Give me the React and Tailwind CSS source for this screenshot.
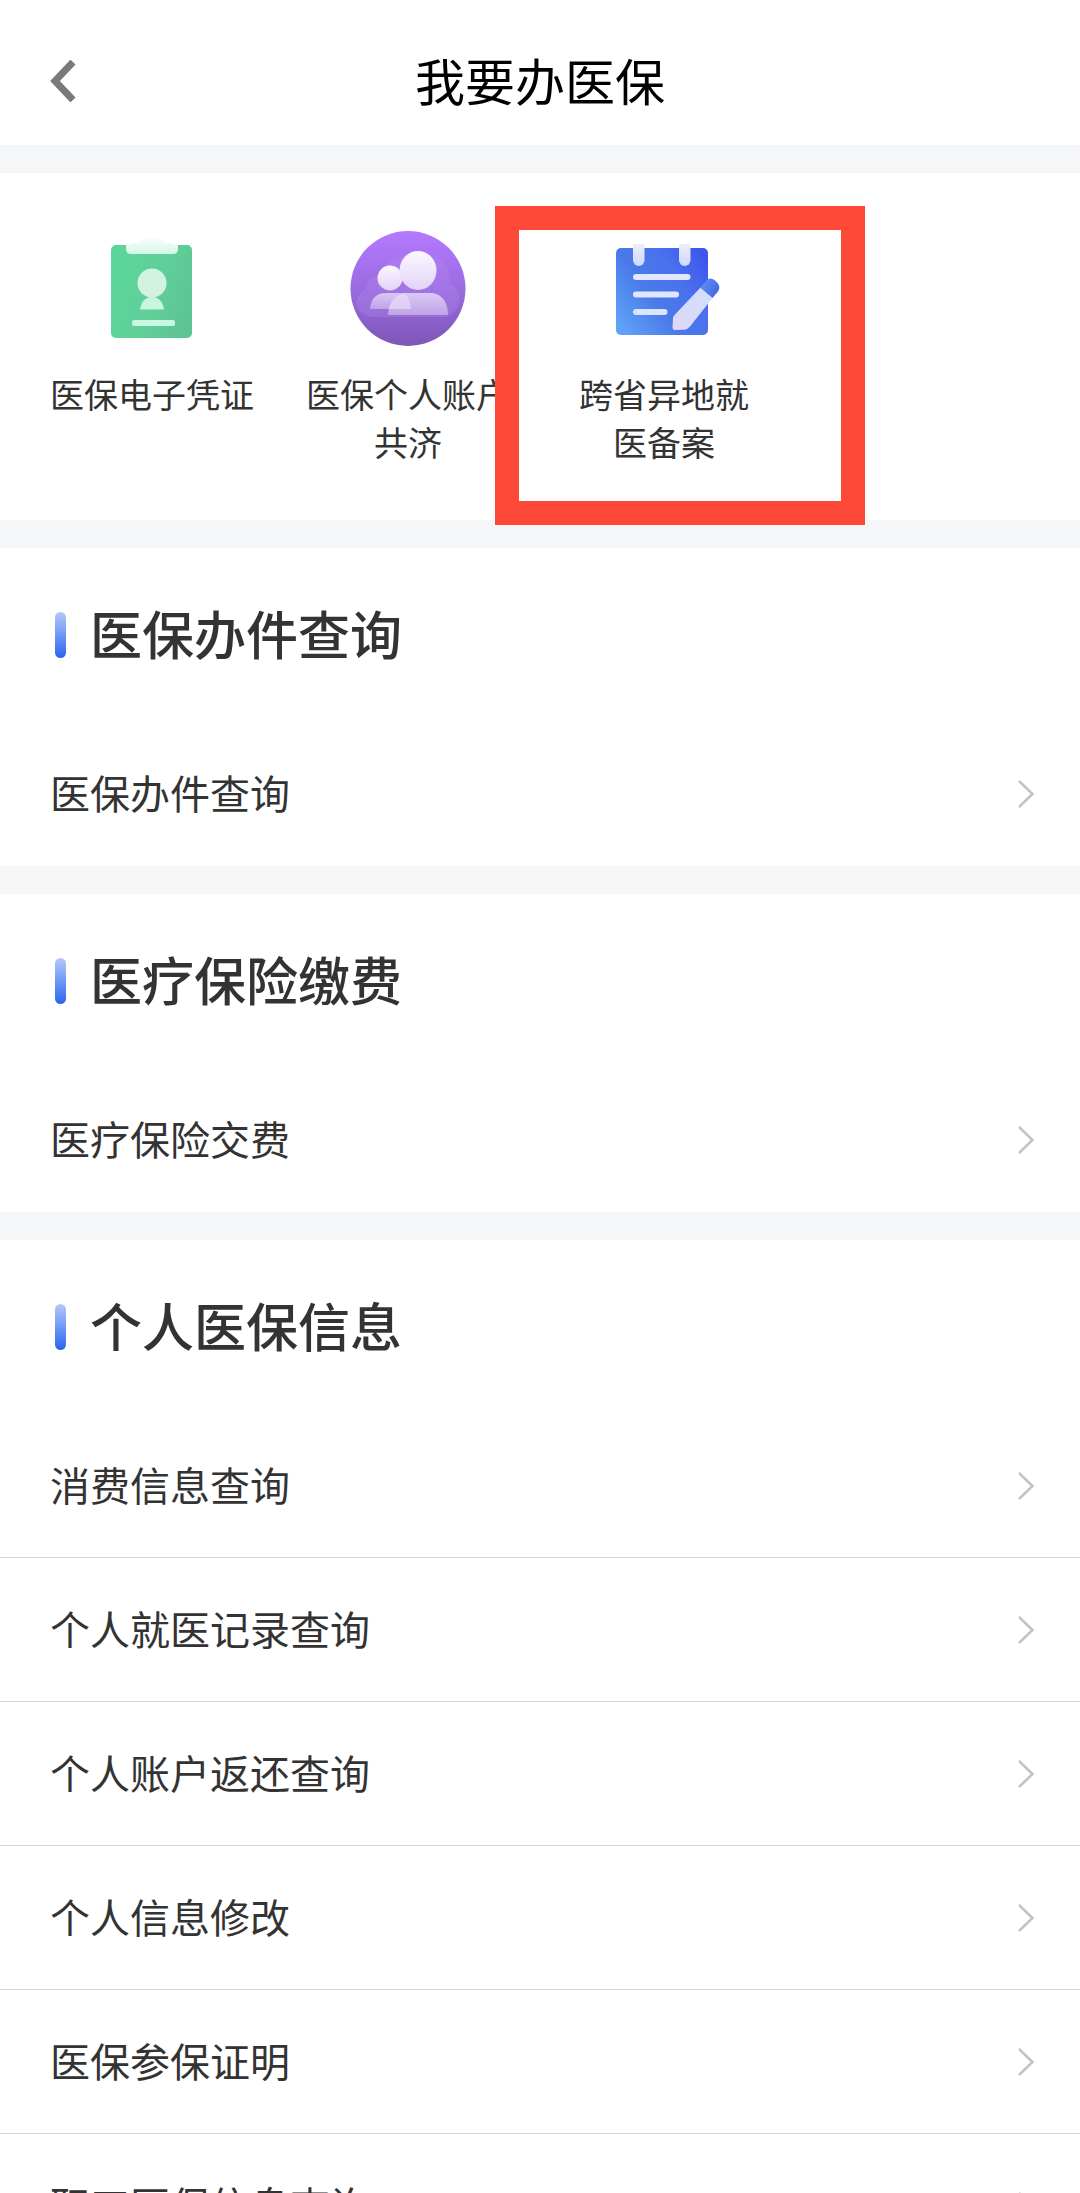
import React from 'react';

const CertificateIcon = () => (
  <svg viewBox="0 0 120 120" className="w-[120px] h-[120px]" aria-hidden="true">
    <defs>
      <linearGradient id="certBody" x1="0" y1="0.3" x2="1" y2="0.7">
        <stop offset="0" stopColor="#5bd699" />
        <stop offset="0.55" stopColor="#60cf9a" />
        <stop offset="1" stopColor="#5dc493" />
      </linearGradient>
      <linearGradient id="certClip" x1="0" y1="0" x2="0" y2="1">
        <stop offset="0" stopColor="#ffffff" />
        <stop offset="1" stopColor="#d3f7e4" />
      </linearGradient>
      <linearGradient id="certHead" x1="0" y1="0" x2="0" y2="1">
        <stop offset="0" stopColor="#cff5e1" />
        <stop offset="1" stopColor="#d5f0e2" />
      </linearGradient>
    </defs>
    <rect x="19" y="17" width="81" height="93" rx="5" fill="url(#certBody)" />
    <path d="M34 17 Q46 15 50 11 Q60 5 70 11 Q74 15 86 17 V21 Q86 26 81 26 H39 Q34 26 34 21 Z" fill="url(#certClip)" />
    <circle cx="60" cy="55" r="14.5" fill="url(#certHead)" />
    <path d="M48 81.5 C49 74 53 69 60 69 C67 69 71 74 72 81.5 Z" fill="#c8f5dd" />
    <rect x="40" y="92" width="43" height="6" rx="2" fill="#c8f8df" />
  </svg>
);

const FamilyIcon = () => (
  <svg viewBox="0 0 120 120" className="w-[120px] h-[120px]" aria-hidden="true">
    <defs>
      <linearGradient id="familyBg" x1="0" y1="0" x2="0" y2="1">
        <stop offset="0" stopColor="#b57aff" />
        <stop offset="0.5" stopColor="#9c6be0" />
        <stop offset="1" stopColor="#7c57b6" />
      </linearGradient>
      <linearGradient id="familyHead" x1="0" y1="0" x2="0" y2="1">
        <stop offset="0" stopColor="#fbf8ff" />
        <stop offset="1" stopColor="#e2d3f6" />
      </linearGradient>
      <linearGradient id="familyTorso" x1="0" y1="0" x2="0" y2="1">
        <stop offset="0" stopColor="#e0d0f6" />
        <stop offset="1" stopColor="#c4a8e8" />
      </linearGradient>
    </defs>
    <circle cx="60" cy="60.5" r="57.5" fill="url(#familyBg)" />
    <path
      d="M24 89 C12 87 7 80 9 72 C10 66 14 63 18 62 C18 53 23 49 30 49 C34 35 48 26 62 28 C70 24 88 26 95 35 C102 41 103 50 101 56 C109 58 113 66 111 74 C109 83 103 89 94 89 Z"
      fill="#b48cf0"
      fillOpacity="0.3"
    />
    <path d="M22 81 C23 70 29 65 37 65 H50 C58 65 62 71 63 81 Z" fill="url(#familyTorso)" fillOpacity="0.9" />
    <circle cx="42" cy="50" r="12.5" fill="url(#familyHead)" />
    <path d="M40 87 C41 72 48 65 58 65 H82 C93 65 100 73 100 87 Z" fill="url(#familyTorso)" fillOpacity="0.92" />
    <path d="M41 81 C43 73 48 67 56 65 C60 68 62 73 63 81 Z" fill="#e6daf8" fillOpacity="0.7" />
    <ellipse cx="70" cy="42.5" rx="18.5" ry="19.5" fill="url(#familyHead)" />
  </svg>
);

const FilingIcon = () => (
  <svg viewBox="9 0 120 120" className="w-[120px] h-[120px]" aria-hidden="true">
    <defs>
      <linearGradient id="filingBody" x1="0" y1="0.85" x2="1" y2="0.15">
        <stop offset="0" stopColor="#5fa2f8" />
        <stop offset="0.4" stopColor="#4a7ae8" />
        <stop offset="0.7" stopColor="#4a70ee" />
        <stop offset="1" stopColor="#3f56ee" />
      </linearGradient>
      <linearGradient id="filingTab" x1="0" y1="0" x2="0" y2="1">
        <stop offset="0" stopColor="#f1ecfb" />
        <stop offset="1" stopColor="#c9dafc" />
      </linearGradient>
      <linearGradient id="filingPen" x1="1" y1="0" x2="0" y2="1">
        <stop offset="0" stopColor="#cfe0fd" />
        <stop offset="1" stopColor="#dfd6f6" />
      </linearGradient>
      <linearGradient id="filingCap" x1="0" y1="0.2" x2="1" y2="0.8">
        <stop offset="0" stopColor="#5b95f3" />
        <stop offset="1" stopColor="#4361e6" />
      </linearGradient>
    </defs>
    <rect x="21" y="20" width="92" height="87" rx="5" fill="url(#filingBody)" />
    <path d="M38 16 H49.5 V32 A5.75 6 0 0 1 38 32 Z" fill="url(#filingTab)" />
    <path d="M84 16 H95.5 V32 A5.75 6 0 0 1 84 32 Z" fill="url(#filingTab)" />
    <rect x="38" y="46" width="57.5" height="6" rx="3" fill="#e1e8fd" />
    <rect x="38" y="63.5" width="46" height="6" rx="3" fill="#dde6fd" />
    <rect x="38" y="81" width="34.5" height="6" rx="3" fill="#d9e5fd" />
    <path d="M105.5 59.5 L117.5 70 L95 98.5 Q92.5 101.5 89 101.7 L80 102 Q77.5 102 77.5 99 L78 90.5 Q78 88.5 80 86.5 Z" fill="url(#filingPen)" />
    <path d="M105.5 59.5 L111 53 Q115 48.500 120 52.500 L122.500 55 Q126 59 123 63.500 L117.500 70 Z" fill="url(#filingCap)" />
  </svg>
);

const services = [
  { icon: CertificateIcon, lines: ['医保电子凭证'] },
  { icon: FamilyIcon, lines: ['医保个人账户', '共济'] },
  { icon: FilingIcon, lines: ['跨省异地就', '医备案'], highlighted: true },
];

const sections = [
  { title: '医保办件查询', items: ['医保办件查询'] },
  { title: '医疗保险缴费', items: ['医疗保险交费'] },
  {
    title: '个人医保信息',
    items: [
      '消费信息查询',
      '个人就医记录查询',
      '个人账户返还查询',
      '个人信息修改',
      '医保参保证明',
      '职工医保信息查询',
    ],
  },
];

const ServiceEntry = ({ icon: Icon, lines, highlighted }) => (
  <a href="#" className="relative flex flex-col items-center gap-[22px]">
    <Icon />
    <span className="text-center text-[34px] leading-[48px] text-[#333333] whitespace-nowrap">
      {lines.map((line) => (
        <span key={line} className="block">{line}</span>
      ))}
    </span>
    {highlighted && (
      <span className="absolute z-10 -left-[41px] -top-[22px] w-[370px] h-[319px] border-24 border-[#ff4938] pointer-events-none"></span>
    )}
  </a>
);

const ListRow = ({ label }) => (
  <li className="h-36 border-b border-[#d6d6d6] last:border-b-0">
    <a href="#" className="flex items-center justify-between h-full pl-[50px] pr-[45px]">
      <span className="pb-1 text-[40px] leading-[56px] text-[#333333]">{label}</span>
      <svg viewBox="0 0 18 30" className="w-[18px] h-[30px]" fill="none" stroke="#c3c3c3" strokeWidth="2.5" aria-hidden="true">
        <path d="M2 2 L15.500 15 L2 28" />
      </svg>
    </a>
  </li>
);

const App = () => {
  return (
    <div className="h-screen flex flex-col bg-[#f5f6f8] font-['Noto_Sans_CJK_SC',sans-serif]">
      {/* Top bar */}
      <header className="relative shrink-0 flex items-center justify-center h-[145px] pt-3 bg-white">
        <button type="button" aria-label="返回" className="absolute left-[44px] top-[56px] p-1 cursor-pointer">
          <svg viewBox="0 0 32 42" className="w-8 h-[42px]" fill="none" stroke="#7a7a7a" strokeWidth="7" aria-hidden="true">
            <path d="M25 2 L7 21 L25 40" />
          </svg>
        </button>
        <h1 className="text-[50px] leading-[64px] font-normal text-black">我要办医保</h1>
      </header>

      <main className="flex-1 min-h-0 overflow-y-auto [scrollbar-width:none] pt-7 flex flex-col gap-7">
        {/* Shortcuts */}
        <nav className="shrink-0 grid grid-cols-4 items-start bg-white pl-6 pr-8 pt-[55px] pb-[54px]">
          {services.map((service) => (
            <ServiceEntry key={service.lines[0]} {...service} />
          ))}
        </nav>

        {/* Grouped links */}
        {sections.map((section) => (
          <section key={section.title} className="shrink-0 bg-white">
            <div className="flex items-center gap-6 h-[174px] pl-[55px]">
              <span className="w-[11px] h-[46px] rounded-full bg-linear-to-b from-[#b5c8f8] to-[#2a62ee]"></span>
              <h2 className="pb-1 text-[52px] leading-[72px] font-medium text-[#333333]">{section.title}</h2>
            </div>
            <ul>
              {section.items.map((item) => (
                <ListRow key={item} label={item} />
              ))}
            </ul>
          </section>
        ))}
      </main>
    </div>
  );
};

export default App;
